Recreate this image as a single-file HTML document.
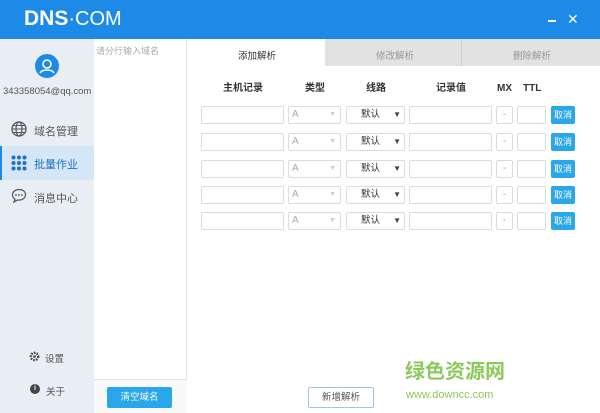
<!DOCTYPE html><html><head><meta charset="utf-8"><style>
*{margin:0;padding:0;box-sizing:border-box}
body{width:600px;height:413px;overflow:hidden;background:#fff;font-family:"Liberation Sans","Noto Sans CJK SC",sans-serif;font-size:10px;color:#333;position:relative}
.a{position:absolute}
.hdr{left:0;top:0;width:600px;height:39px;background:#1e8ae8}
.side{left:0;top:39px;width:94px;height:374px;background:#e9eef5}
.col{left:94px;top:39px;width:93px;height:374px;background:#fff;border-right:1px solid #e6e6e6}
.inp{height:18px;border:1px solid #dcdcdc;background:#fff;border-radius:2px}
.btn{width:24px;height:18px;background:#2aa6ea;color:#fff;font-size:9px;text-align:center;line-height:18px;border-radius:2px}
.th{top:82px;height:14px;line-height:14px;font-size:10px;font-weight:bold;color:#333}
.sel{color:#aaa;font-size:10px;line-height:16px;padding-left:3px}
</style></head><body>
<div class="a hdr"></div>
<div class="a" style="left:24px;top:7px;color:#fff;font-size:21px;font-weight:bold">DNS<span style="font-weight:normal;font-size:20px">·COM</span></div>
<div class="a" style="left:548px;top:20px;width:8px;height:2px;background:#fff"></div>
<div class="a" style="left:567px;top:11px;color:#fff;font-size:14px">✕</div>
<div class="a side"></div>
<div class="a" style="left:0;top:146px;width:94px;height:34px;background:#d5e6f6;border-left:2px solid #1e8ae8"></div>
<div class="a" style="left:35px;top:54px;width:24px;height:24px;border-radius:50%;background:#1e8ae8"></div>
<svg class="a" style="left:35px;top:54px" width="24" height="24"><circle cx="12" cy="10" r="4" fill="none" stroke="#fff" stroke-width="1.6"/><path d="M5 19c2-4 12-4 14 0" fill="none" stroke="#fff" stroke-width="1.6"/></svg>
<div class="a" style="left:3px;top:86px;font-size:9.5px;color:#555">343358054@qq.com</div>
<svg class="a" style="left:11px;top:121px" width="16" height="16"><circle cx="8" cy="8" r="7" fill="none" stroke="#555" stroke-width="1.3"/><ellipse cx="8" cy="8" rx="3" ry="7" fill="none" stroke="#555" stroke-width="1.2"/><path d="M1 8h14M2.5 4.5h11M2.5 11.5h11" stroke="#555" stroke-width="1.1"/></svg>
<div class="a" style="left:34px;top:123px;font-size:11px;color:#555">域名管理</div>
<svg class="a" style="left:11px;top:155px" width="16" height="16" fill="#1e70c8"><circle cx="2.5" cy="2.5" r="2"/><circle cx="8" cy="2.5" r="2"/><circle cx="13.5" cy="2.5" r="2"/><circle cx="2.5" cy="8" r="2"/><circle cx="8" cy="8" r="2"/><circle cx="13.5" cy="8" r="2"/><circle cx="2.5" cy="13.5" r="2"/><circle cx="8" cy="13.5" r="2"/><circle cx="13.5" cy="13.5" r="2"/></svg>
<div class="a" style="left:34px;top:156px;font-size:11px;color:#555;color:#1e70c8">批量作业</div>
<svg class="a" style="left:11px;top:188px" width="17" height="16"><path d="M8 1.5c-4 0-6.5 2.5-6.5 5.5 0 2 1 3.3 2.5 4.2L3 14l3.5-2c.5.1 1 .1 1.5.1 4 0 6.5-2.5 6.5-5.5S12 1.5 8 1.5z" fill="none" stroke="#555" stroke-width="1.2"/><circle cx="5" cy="7" r=".9" fill="#555"/><circle cx="8" cy="7" r=".9" fill="#555"/><circle cx="11" cy="7" r=".9" fill="#555"/></svg>
<div class="a" style="left:34px;top:190px;font-size:11px;color:#555">消息中心</div>
<svg class="a" style="left:29px;top:351px" width="11" height="11"><circle cx="5.5" cy="5.5" r="3.3" fill="none" stroke="#444" stroke-width="1.6" stroke-dasharray="1.5 1"/><circle cx="5.5" cy="5.5" r="4.3" fill="none" stroke="#444" stroke-width="1.2" stroke-dasharray="1.6 1.6"/><circle cx="5.5" cy="5.5" r="1.3" fill="#444"/></svg>
<div class="a" style="left:45px;top:351px;font-size:9.5px;color:#555">设置</div>
<div class="a" style="left:30px;top:384px;width:10px;height:10px;border-radius:50%;background:#444;color:#fff;font-size:7px;text-align:center;line-height:10px;font-weight:bold">i</div>
<div class="a" style="left:46px;top:384px;font-size:9.5px;color:#555">关于</div>
<div class="a col"></div>
<div class="a" style="left:96px;top:44px;font-size:9px;color:#aaa">请分行输入域名</div>
<div class="a" style="left:94px;top:379px;width:93px;height:34px;background:#f8f9fb;border-top:1px solid #e3e3e3"></div>
<div class="a" style="left:107px;top:387px;width:65px;height:21px;background:#2aa6ea;color:#fff;font-size:9.5px;text-align:center;line-height:21px;border-radius:2px">清空域名</div>
<div class="a" style="left:325px;top:39px;width:275px;height:27px;background:#e2e2e2"></div>
<div class="a" style="left:461px;top:39px;width:1px;height:27px;background:#d0d0d0"></div>
<div class="a" style="left:238px;top:48px;font-size:9.5px;color:#333">添加解析</div>
<div class="a" style="left:376px;top:48px;font-size:9.5px;color:#999">修改解析</div>
<div class="a" style="left:513px;top:48px;font-size:9.5px;color:#999">删除解析</div>
<div class="a th" style="left:223px">主机记录</div>
<div class="a th" style="left:305px">类型</div>
<div class="a th" style="left:366px">线路</div>
<div class="a th" style="left:436px">记录值</div>
<div class="a th" style="left:497px;font-family:'Liberation Sans','Noto Sans CJK SC',sans-serif">MX</div>
<div class="a th" style="left:523px">TTL</div>
<div id="rows"></div>
<script>
var ys=[106,133,160,186,212],h='';
ys.forEach(function(y){
h+='<div class="a inp" style="left:201px;top:'+y+'px;width:83px"></div>'+
'<div class="a inp sel" style="left:288px;top:'+y+'px;width:53px">A<span style="position:absolute;right:4px;font-size:7px;color:#ccc">▼</span></div>'+
'<div class="a inp" style="left:346px;top:'+y+'px;width:59px;font-size:9.5px;line-height:16px;padding-left:14px;color:#333">默认<span style="position:absolute;right:3px;font-size:8px;color:#444">▼</span></div>'+
'<div class="a inp" style="left:409px;top:'+y+'px;width:83px"></div>'+
'<div class="a inp" style="left:496px;top:'+y+'px;width:17px;color:#aaa;text-align:center;line-height:16px">-</div>'+
'<div class="a inp" style="left:517px;top:'+y+'px;width:29px"></div>'+
'<div class="a btn" style="left:551px;top:'+y+'px">取消</div>';});
document.getElementById('rows').innerHTML=h;
</script>
<div class="a" style="left:308px;top:387px;width:66px;height:21px;border:1px solid #9ac8e8;color:#555;font-size:9.5px;text-align:center;line-height:19px;border-radius:2px">新增解析</div>
<div class="a" style="left:405px;top:355px;font-size:20px;color:#8cc95a;font-weight:bold;letter-spacing:0px">绿色资源网</div>
<div class="a" style="left:406px;top:389px;font-size:11px;color:#8cc95a">www.downcc.com</div>
</body></html>
